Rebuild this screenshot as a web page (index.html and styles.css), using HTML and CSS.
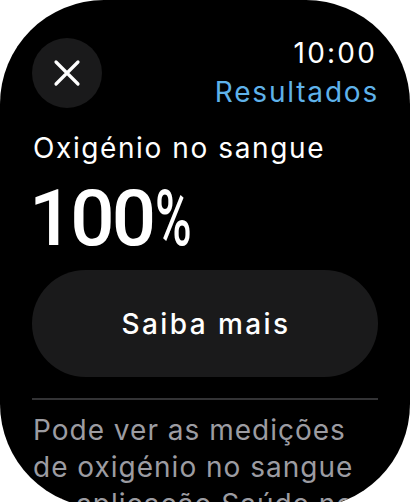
FILE: index.html
```html
<!DOCTYPE html>
<html lang="pt">
<head>
<meta charset="utf-8">
<link rel="stylesheet" href="styles.css">
</head>
<body>
<div class="screen">
  <header class="top">
    <button class="close" aria-label="Fechar">
      <svg width="28" height="28" viewBox="0 0 28 28"><path d="M3 3L25 25M25 3L3 25" stroke="#fff" stroke-width="3.2" stroke-linecap="round"/></svg>
    </button>
    <div class="status">
      <div class="time">10:00</div>
      <div class="nav-title">Resultados</div>
    </div>
  </header>
  <main class="content">
    <h1 class="label">Oxigénio no sangue</h1>
    <div class="value">100<span class="pct">%</span></div>
    <button class="more">Saiba mais</button>
    <hr class="sep">
    <p class="note">Pode ver as medições de oxigénio no sangue na aplicação Saúde no iPhone.</p>
  </main>
</div>
</body>
</html>
```
FILE: styles.css
```css
html, body {
  margin: 0;
  padding: 0;
  background: #fff;
  overflow: hidden;
}
body {
  width: 410px;
  height: 502px;
  font-family: Inter, "Noto Sans", sans-serif;
}
.screen {
  width: 410px;
  height: 508px;
  background: #000;
  border-radius: 104px;
  overflow: hidden;
  color: #fff;
}
.top {
  display: flex;
  justify-content: space-between;
  align-items: flex-start;
  padding: 34px 33px 0 32px;
}
.close {
  width: 70px;
  height: 70px;
  margin-top: 4px;
  border: none;
  border-radius: 50%;
  background: #1a1a1b;
  display: flex;
  align-items: center;
  justify-content: center;
  padding: 0;
}
.status {
  text-align: right;
  font-size: 28px;
  line-height: 39px;
}
.time {
  color: #fff;
  letter-spacing: 2.2px;
}
.nav-title {
  color: #5fb2ea;
  letter-spacing: 1.8px;
  margin-right: -2px;
}
.content {
  padding: 17px 32px 0 33px;
}
.label {
  margin: 0;
  font-size: 28px;
  font-weight: 400;
  line-height: 39px;
  letter-spacing: 1.6px;
}
.value {
  margin: 6px 0 0 -4px;
  font-family: Roboto, Inter, sans-serif;
  font-size: 78px;
  font-weight: 500;
  line-height: 90px;
  letter-spacing: -3px;
}
.pct {
  display: inline-block;
  margin-left: 2px;
  transform: scaleX(0.64);
  transform-origin: left center;
  letter-spacing: 0;
}
.more {
  display: block;
  width: 346px;
  height: 107px;
  margin: 6px 0 0 -1px;
  border: none;
  border-radius: 54px;
  background: #1a1a1b;
  color: #fff;
  font-family: inherit;
  font-size: 28px;
  font-weight: 500;
  letter-spacing: 2.4px;
  padding: 0 0 0 2px;
}
.sep {
  margin: 21px 0 0 -1px;
  width: 346px;
  border: none;
  height: 2px;
  background: #333335;
}
.note {
  margin: 12px 0 0;
  font-size: 28px;
  line-height: 37px;
  letter-spacing: 1px;
  color: #9c9ca2;
}
```
